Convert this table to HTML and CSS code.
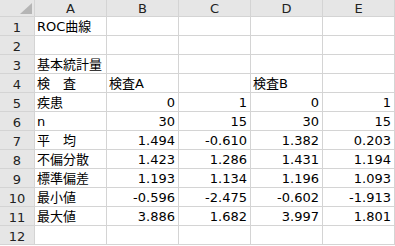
FILE: index.html
```html
<!DOCTYPE html>
<html lang="ja">
<head>
<meta charset="utf-8">
<link rel="stylesheet" href="styles.css">
</head>
<body>
<div class="sheet">
  <div class="hd corner"><svg class="tri" width="12" height="11" viewBox="0 0 12 11"><polygon points="12,0 12,11 0,11" fill="#b5b5b5"/></svg></div>
  <div class="hd col">A</div><div class="hd col">B</div><div class="hd col">C</div><div class="hd col">D</div><div class="hd col">E</div>

  <div class="hd row">1</div><div class="c">ROC曲線</div><div class="c"></div><div class="c"></div><div class="c"></div><div class="c"></div>
  <div class="hd row">2</div><div class="c"></div><div class="c"></div><div class="c"></div><div class="c"></div><div class="c"></div>
  <div class="hd row">3</div><div class="c">基本統計量</div><div class="c"></div><div class="c"></div><div class="c"></div><div class="c"></div>
  <div class="hd row">4</div><div class="c">検　査</div><div class="c">検査A</div><div class="c"></div><div class="c">検査B</div><div class="c"></div>
  <div class="hd row">5</div><div class="c">疾患</div><div class="c n">0</div><div class="c n">1</div><div class="c n">0</div><div class="c n">1</div>
  <div class="hd row">6</div><div class="c">n</div><div class="c n">30</div><div class="c n">15</div><div class="c n">30</div><div class="c n">15</div>
  <div class="hd row">7</div><div class="c">平　均</div><div class="c n">1.494</div><div class="c n">-0.610</div><div class="c n">1.382</div><div class="c n">0.203</div>
  <div class="hd row">8</div><div class="c">不偏分散</div><div class="c n">1.423</div><div class="c n">1.286</div><div class="c n">1.431</div><div class="c n">1.194</div>
  <div class="hd row">9</div><div class="c">標準偏差</div><div class="c n">1.193</div><div class="c n">1.134</div><div class="c n">1.196</div><div class="c n">1.093</div>
  <div class="hd row">10</div><div class="c">最小値</div><div class="c n">-0.596</div><div class="c n">-2.475</div><div class="c n">-0.602</div><div class="c n">-1.913</div>
  <div class="hd row">11</div><div class="c">最大値</div><div class="c n">3.886</div><div class="c n">1.682</div><div class="c n">3.997</div><div class="c n">1.801</div>
  <div class="hd row">12</div><div class="c"></div><div class="c"></div><div class="c"></div><div class="c"></div><div class="c"></div>
</div>
</body>
</html>
```

FILE: styles.css
```css
html, body {
  margin: 0;
  padding: 0;
  background: #ffffff;
}
.sheet {
  display: grid;
  grid-template-columns: 35px repeat(5, 72px);
  grid-template-rows: 17px repeat(12, 19px) 10px;
  font-family: "DejaVu Sans", "Noto Sans CJK JP", sans-serif;
  font-size: 13px;
  color: #000;
}
.sheet > div {
  box-sizing: border-box;
  border-right: 1px solid #d4d4d4;
  border-bottom: 1px solid #d4d4d4;
  white-space: nowrap;
  overflow: visible;
}
.hd {
  background: #e6e6e6;
  color: #222;
  display: flex;
  align-items: center;
  justify-content: center;
  line-height: 1;
  border-right-color: #ababab;
  border-bottom-color: #ababab;
}
.hd.col {
  padding-top: 1px;
}
.hd.row {
  padding-top: 2px;
}
.hd.corner {
  justify-content: flex-end;
  align-items: flex-end;
  padding: 0 2px 2px 0;
}
.tri { display: block; }
.c {
  padding: 0 3px 0 2px;
  display: flex;
  align-items: flex-end;
  line-height: 16px;
}
.c.n {
  justify-content: flex-end;
}
```
